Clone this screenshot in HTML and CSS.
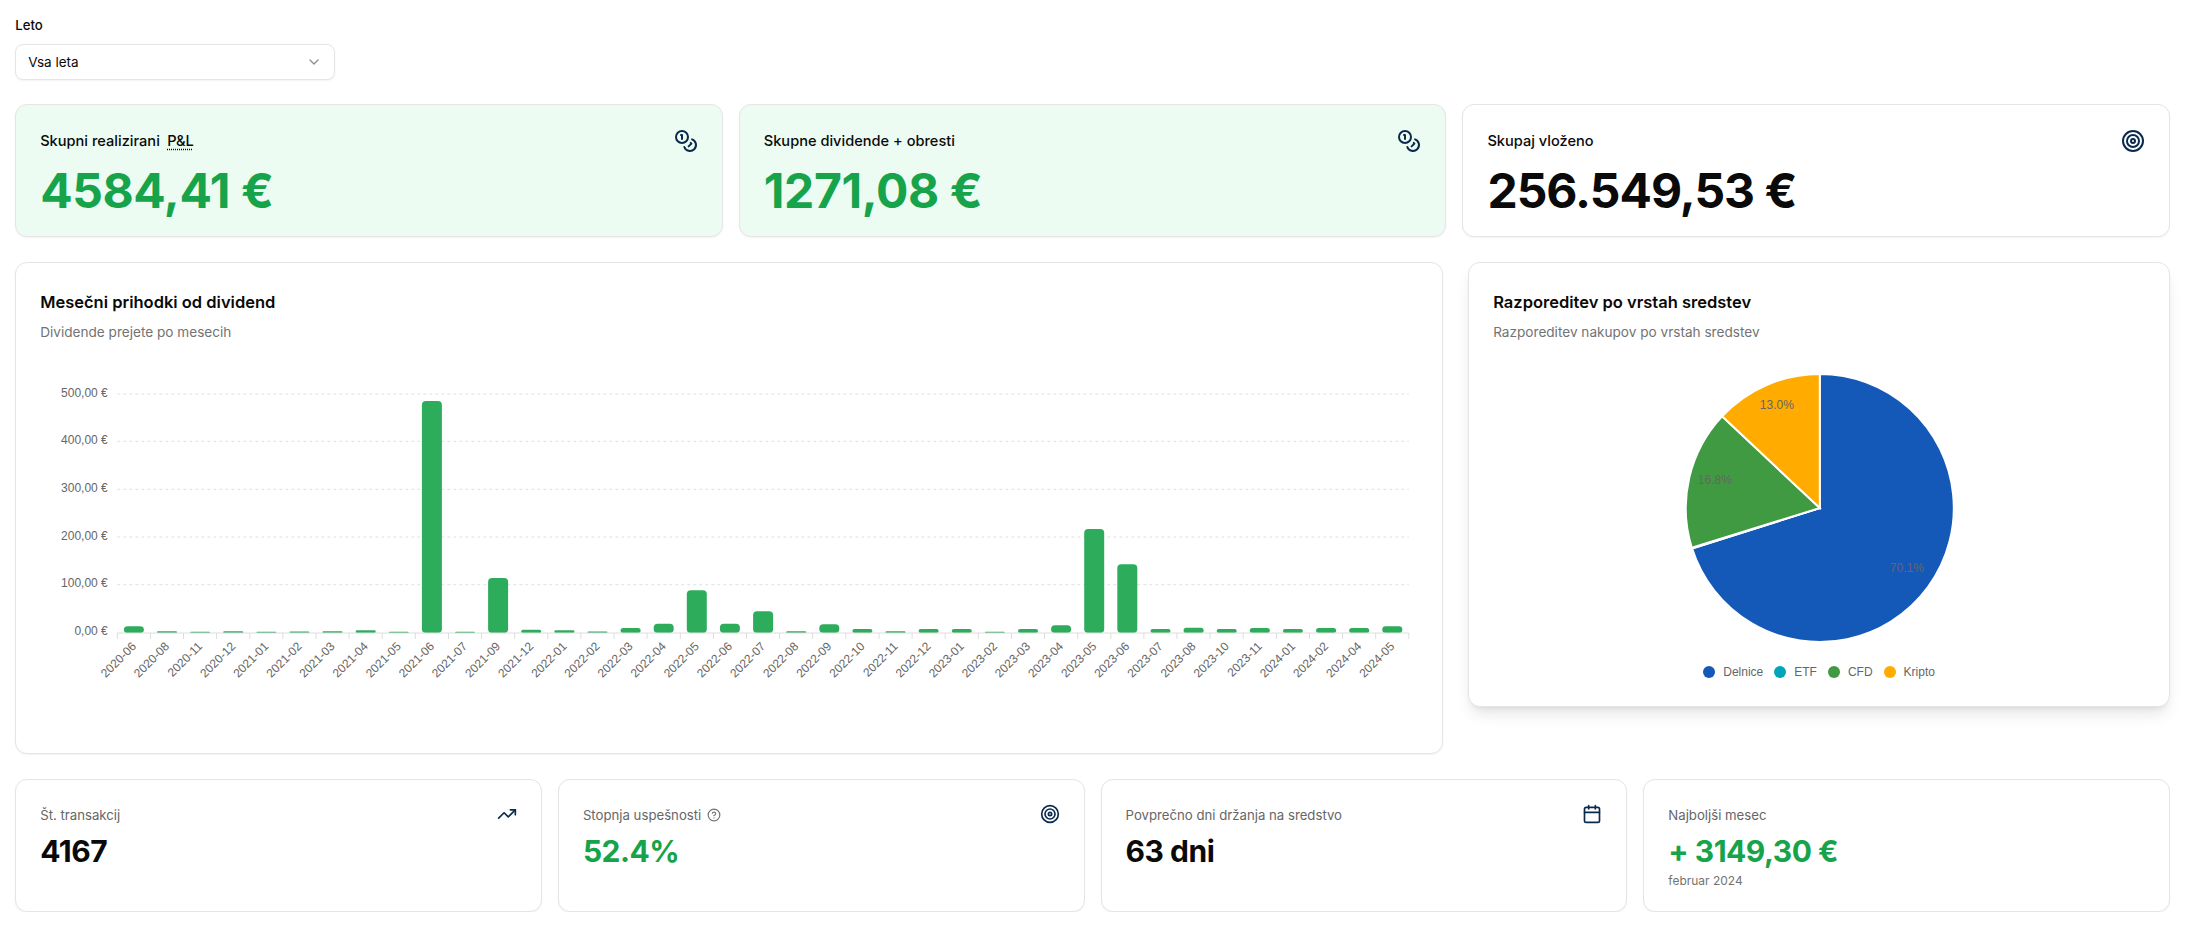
FILE: index.html
```html
<!DOCTYPE html>
<html lang="sl">
<head>
<meta charset="utf-8">
<title>Leto</title>
<link rel="stylesheet" href="styles.css">
</head>
<body>
<main class="page">
  <section class="filter">
    <label class="filter-label">Leto</label>
    <div class="select">
      <span>Vsa leta</span>
      <svg class="chev" viewBox="0 0 24 24"><path d="m6 9 6 6 6-6"/></svg>
    </div>
  </section>

  <section class="row-top">
    <article class="card stat stat-green">
      <header class="stat-head">
        <h3 class="stat-title">Skupni realizirani <abbr class="abbr">P&amp;L</abbr></h3>
        <svg class="icon" viewBox="0 0 24 24"><circle cx="8" cy="8" r="6"/><path d="M18.09 10.37A6 6 0 1 1 10.34 18"/><path d="M7 6h1v4"/><path d="m16.71 13.88.7.71-2.82 2.82"/></svg>
      </header>
      <div class="stat-value green">4584,41 €</div>
    </article>
    <article class="card stat stat-green">
      <header class="stat-head">
        <h3 class="stat-title">Skupne dividende + obresti</h3>
        <svg class="icon" viewBox="0 0 24 24"><circle cx="8" cy="8" r="6"/><path d="M18.09 10.37A6 6 0 1 1 10.34 18"/><path d="M7 6h1v4"/><path d="m16.71 13.88.7.71-2.82 2.82"/></svg>
      </header>
      <div class="stat-value green">1271,08 €</div>
    </article>
    <article class="card stat">
      <header class="stat-head">
        <h3 class="stat-title">Skupaj vloženo</h3>
        <svg class="icon" viewBox="0 0 24 24"><circle cx="12" cy="12" r="10"/><circle cx="12" cy="12" r="6"/><circle cx="12" cy="12" r="2"/></svg>
      </header>
      <div class="stat-value">256.549,53 €</div>
    </article>
  </section>

  <section class="row-charts">
    <article class="card chart-card">
      <h2 class="chart-title">Mesečni prihodki od dividend</h2>
      <p class="chart-sub">Dividende prejete po mesecih</p>
      <svg class="bar-chart" viewBox="40.2 370 1378 360">
        <g class="grid">
          <path d="M117.5 395H1409M117.5 442.3H1409M117.5 490.3H1409M117.5 538H1409M117.5 585.7H1409"/>
        </g>
        <g class="ylabels" text-anchor="end">
          <text x="108" y="398">500,00 €</text>
          <text x="108" y="445">400,00 €</text>
          <text x="108" y="493">300,00 €</text>
          <text x="108" y="541">200,00 €</text>
          <text x="108" y="588">100,00 €</text>
          <text x="108" y="636">0,00 €</text>
        </g>
        <g class="bars">
          <rect x="124.1" y="627.3" width="20" height="6.7" rx="4"/>
          <rect x="157.2" y="632.3" width="20" height="1.7" rx="1"/>
          <rect x="190.3" y="632.7" width="20" height="1.3" rx="1"/>
          <rect x="223.4" y="632.3" width="20" height="1.7" rx="1"/>
          <rect x="256.5" y="632.7" width="20" height="1.3" rx="1"/>
          <rect x="289.6" y="632.5" width="20" height="1.5" rx="1"/>
          <rect x="322.7" y="632.3" width="20" height="1.7" rx="1"/>
          <rect x="355.9" y="631.3" width="20" height="2.7" rx="1.3"/>
          <rect x="389" y="632.7" width="20" height="1.3" rx="1"/>
          <rect x="422.1" y="402" width="20" height="232" rx="4"/>
          <rect x="455.2" y="632.7" width="20" height="1.3" rx="1"/>
          <rect x="488.3" y="579" width="20" height="55" rx="4"/>
          <rect x="521.4" y="630.7" width="20" height="3.3" rx="1.6"/>
          <rect x="554.6" y="631.3" width="20" height="2.7" rx="1.3"/>
          <rect x="587.7" y="632.5" width="20" height="1.5" rx="1"/>
          <rect x="620.8" y="629" width="20" height="5" rx="2.5"/>
          <rect x="653.9" y="624.7" width="20" height="9.3" rx="4"/>
          <rect x="687" y="591.3" width="20" height="42.7" rx="4"/>
          <rect x="720.1" y="624.7" width="20" height="9.3" rx="4"/>
          <rect x="753.3" y="612.3" width="20" height="21.7" rx="4"/>
          <rect x="786.4" y="632.3" width="20" height="1.7" rx="1"/>
          <rect x="819.5" y="625.3" width="20" height="8.7" rx="4"/>
          <rect x="852.6" y="630" width="20" height="4" rx="2"/>
          <rect x="885.7" y="632.3" width="20" height="1.7" rx="1"/>
          <rect x="918.8" y="630" width="20" height="4" rx="2"/>
          <rect x="952" y="630" width="20" height="4" rx="2"/>
          <rect x="985.1" y="632.7" width="20" height="1.3" rx="1"/>
          <rect x="1018.2" y="630" width="20" height="4" rx="2"/>
          <rect x="1051.3" y="626.3" width="20" height="7.7" rx="3.8"/>
          <rect x="1084.4" y="530" width="20" height="104" rx="4"/>
          <rect x="1117.5" y="565.3" width="20" height="68.7" rx="4"/>
          <rect x="1150.7" y="630" width="20" height="4" rx="2"/>
          <rect x="1183.8" y="628.7" width="20" height="5.3" rx="2.6"/>
          <rect x="1216.9" y="630" width="20" height="4" rx="2"/>
          <rect x="1250" y="629" width="20" height="5" rx="2.5"/>
          <rect x="1283.1" y="630" width="20" height="4" rx="2"/>
          <rect x="1316.3" y="629" width="20" height="5" rx="2.5"/>
          <rect x="1349.4" y="629" width="20" height="5" rx="2.5"/>
          <rect x="1382.5" y="627.3" width="20" height="6.7" rx="3.3"/>
        </g>
        <path class="axis" d="M117.5 634H1409M117.5 634v6M150.6 634v6M183.7 634v6M216.8 634v6M250 634v6M283.1 634v6M316.2 634v6M349.3 634v6M382.4 634v6M415.5 634v6M448.7 634v6M481.8 634v6M514.9 634v6M548 634v6M581.1 634v6M614.2 634v6M647.3 634v6M680.5 634v6M713.6 634v6M746.7 634v6M779.8 634v6M812.9 634v6M846 634v6M879.2 634v6M912.3 634v6M945.4 634v6M978.5 634v6M1011.6 634v6M1044.7 634v6M1077.9 634v6M1111 634v6M1144.1 634v6M1177.2 634v6M1210.3 634v6M1243.4 634v6M1276.6 634v6M1309.7 634v6M1342.8 634v6M1375.9 634v6M1409 634v6"/>
        <g class="xlabels" text-anchor="end">
          <text x="137.1" y="648" transform="rotate(-45 137.1 648)">2020-06</text>
          <text x="170.2" y="648" transform="rotate(-45 170.2 648)">2020-08</text>
          <text x="203.3" y="648" transform="rotate(-45 203.3 648)">2020-11</text>
          <text x="236.4" y="648" transform="rotate(-45 236.4 648)">2020-12</text>
          <text x="269.5" y="648" transform="rotate(-45 269.5 648)">2021-01</text>
          <text x="302.6" y="648" transform="rotate(-45 302.6 648)">2021-02</text>
          <text x="335.7" y="648" transform="rotate(-45 335.7 648)">2021-03</text>
          <text x="368.9" y="648" transform="rotate(-45 368.9 648)">2021-04</text>
          <text x="402" y="648" transform="rotate(-45 402 648)">2021-05</text>
          <text x="435.1" y="648" transform="rotate(-45 435.1 648)">2021-06</text>
          <text x="468.2" y="648" transform="rotate(-45 468.2 648)">2021-07</text>
          <text x="501.3" y="648" transform="rotate(-45 501.3 648)">2021-09</text>
          <text x="534.4" y="648" transform="rotate(-45 534.4 648)">2021-12</text>
          <text x="567.6" y="648" transform="rotate(-45 567.6 648)">2022-01</text>
          <text x="600.7" y="648" transform="rotate(-45 600.7 648)">2022-02</text>
          <text x="633.8" y="648" transform="rotate(-45 633.8 648)">2022-03</text>
          <text x="666.9" y="648" transform="rotate(-45 666.9 648)">2022-04</text>
          <text x="700" y="648" transform="rotate(-45 700 648)">2022-05</text>
          <text x="733.1" y="648" transform="rotate(-45 733.1 648)">2022-06</text>
          <text x="766.3" y="648" transform="rotate(-45 766.3 648)">2022-07</text>
          <text x="799.4" y="648" transform="rotate(-45 799.4 648)">2022-08</text>
          <text x="832.5" y="648" transform="rotate(-45 832.5 648)">2022-09</text>
          <text x="865.6" y="648" transform="rotate(-45 865.6 648)">2022-10</text>
          <text x="898.7" y="648" transform="rotate(-45 898.7 648)">2022-11</text>
          <text x="931.8" y="648" transform="rotate(-45 931.8 648)">2022-12</text>
          <text x="965" y="648" transform="rotate(-45 965 648)">2023-01</text>
          <text x="998.1" y="648" transform="rotate(-45 998.1 648)">2023-02</text>
          <text x="1031.2" y="648" transform="rotate(-45 1031.2 648)">2023-03</text>
          <text x="1064.3" y="648" transform="rotate(-45 1064.3 648)">2023-04</text>
          <text x="1097.4" y="648" transform="rotate(-45 1097.4 648)">2023-05</text>
          <text x="1130.5" y="648" transform="rotate(-45 1130.5 648)">2023-06</text>
          <text x="1163.7" y="648" transform="rotate(-45 1163.7 648)">2023-07</text>
          <text x="1196.8" y="648" transform="rotate(-45 1196.8 648)">2023-08</text>
          <text x="1229.9" y="648" transform="rotate(-45 1229.9 648)">2023-10</text>
          <text x="1263" y="648" transform="rotate(-45 1263 648)">2023-11</text>
          <text x="1296.1" y="648" transform="rotate(-45 1296.1 648)">2024-01</text>
          <text x="1329.3" y="648" transform="rotate(-45 1329.3 648)">2024-02</text>
          <text x="1362.4" y="648" transform="rotate(-45 1362.4 648)">2024-04</text>
          <text x="1395.5" y="648" transform="rotate(-45 1395.5 648)">2024-05</text>
        </g>
      </svg>
    </article>

    <article class="card chart-card pie-card">
      <h2 class="chart-title">Razporeditev po vrstah sredstev</h2>
      <p class="chart-sub">Razporeditev nakupov po vrstah sredstev</p>
      <svg class="pie-chart" viewBox="1493.2 360 652 296">
        <g class="slices">
          <path class="c-blue" d="M1820 509L1820 375A134 134 0 1 1 1692.3 549.6Z"/>
          <path class="c-teal" d="M1820 509L1692.3 549.6A134 134 0 0 1 1692 548.8Z"/>
          <path class="c-green" d="M1820 509L1692 548.8A134 134 0 0 1 1722.3 417.3Z"/>
          <path class="c-orange" d="M1820 509L1722.3 417.3A134 134 0 0 1 1820 375Z"/>
        </g>
        <g class="pie-labels" text-anchor="middle">
          <text x="1907" y="573">70.1%</text>
          <text x="1715" y="485">16.8%</text>
          <text x="1777" y="410">13.0%</text>
        </g>
      </svg>
      <ul class="legend">
        <li><i class="dot bg-blue"></i>Delnice</li>
        <li><i class="dot bg-teal"></i>ETF</li>
        <li><i class="dot bg-green"></i>CFD</li>
        <li><i class="dot bg-orange"></i>Kripto</li>
      </ul>
    </article>
  </section>

  <section class="row-bottom">
    <article class="card mini">
      <header class="mini-head">
        <h3 class="mini-title">Št. transakcij</h3>
        <svg class="icon icon-sm" viewBox="0 0 24 24"><polyline points="22 7 13.5 15.5 8.5 10.5 2 17"/><polyline points="16 7 22 7 22 13"/></svg>
      </header>
      <div class="mini-value">4167</div>
    </article>
    <article class="card mini">
      <header class="mini-head">
        <h3 class="mini-title">Stopnja uspešnosti
          <svg class="help" viewBox="0 0 24 24"><circle cx="12" cy="12" r="10"/><path d="M9.09 9a3 3 0 0 1 5.83 1c0 2-3 3-3 3"/><path d="M12 17h.01"/></svg>
        </h3>
        <svg class="icon icon-sm" viewBox="0 0 24 24"><circle cx="12" cy="12" r="10"/><circle cx="12" cy="12" r="6"/><circle cx="12" cy="12" r="2"/></svg>
      </header>
      <div class="mini-value green">52.4%</div>
    </article>
    <article class="card mini">
      <header class="mini-head">
        <h3 class="mini-title">Povprečno dni držanja na sredstvo</h3>
        <svg class="icon icon-sm" viewBox="0 0 24 24"><path d="M8 2v4"/><path d="M16 2v4"/><rect width="18" height="18" x="3" y="4" rx="2"/><path d="M3 10h18"/></svg>
      </header>
      <div class="mini-value">63 dni</div>
    </article>
    <article class="card mini">
      <header class="mini-head">
        <h3 class="mini-title">Najboljši mesec</h3>
      </header>
      <div class="mini-value green">+ 3149,30 €</div>
      <div class="mini-sub">februar 2024</div>
    </article>
  </section>
</main>
</body>
</html>
```

FILE: styles.css
```css
* { box-sizing: border-box; }
html, body { margin: 0; padding: 0; background: #fff; }
body {
  font-family: Inter, "Liberation Sans", sans-serif;
  color: #0a0a0a;
  font-size: 13.5px;
  line-height: 20px;
}
h2, h3, p, ul { margin: 0; padding: 0; }
.page { padding: 15px 16px 0 15.2px; }

.filter-label { display: block; font-size: 13.2px; font-weight: 500; line-height: 20px; }
.select {
  margin-top: 9px;
  width: 320px;
  height: 36px;
  display: flex;
  align-items: center;
  justify-content: space-between;
  padding: 0 12px;
  background: #fff;
  border: 1px solid #e5e5e5;
  border-radius: 8px;
  box-shadow: 0 1px 2px rgba(0,0,0,.05);
}
.chev { width: 16px; height: 16px; fill: none; stroke: #737373; stroke-width: 2; stroke-linecap: round; stroke-linejoin: round; opacity: .8; }

.card {
  background: #fff;
  border: 1px solid #e5e5e5;
  border-radius: 12px;
  box-shadow: 0 1px 2px rgba(0,0,0,.05);
}

.row-top { margin-top: 24px; display: grid; grid-template-columns: repeat(3, 1fr); gap: 16px; }
.stat { height: 133px; padding: 24px; }
.stat-green { background: #ecfcf2; }
.stat-head { display: flex; justify-content: space-between; align-items: flex-start; height: 24px; }
.stat-title { font-size: 14.6px; font-weight: 500; line-height: 24px; }
.abbr { margin-left: 3.5px; text-decoration: underline dotted; text-underline-offset: 3px; }
.stat-value { margin-top: 13.5px; font-size: 48px; line-height: 48px; font-weight: 700; letter-spacing: -1px; }
.stat-value.green { letter-spacing: -.4px; }
.green { color: #16a34a; }

.icon { width: 24px; height: 24px; flex: none; fill: none; stroke: #0a2a4d; stroke-width: 2; stroke-linecap: round; stroke-linejoin: round; }
.icon-sm { width: 20px; height: 20px; }

.row-charts { margin-top: 25px; display: grid; grid-template-columns: 1428px 701.8px; column-gap: 25px; align-items: start; }
.chart-card { padding: 25px 24px 24px; height: 492px; }
.pie-card { height: 445px; padding: 25px 24px 24px; box-shadow: 0 10px 15px -3px rgba(0,0,0,.1), 0 4px 6px -4px rgba(0,0,0,.1); }
.chart-title { font-size: 16.5px; line-height: 28px; font-weight: 600; }
.chart-sub { margin-top: 6px; font-size: 13.6px; line-height: 20px; color: #737373; }

.bar-chart { display: block; margin-top: 27px; width: 1378px; height: 360px; }
.grid path { fill: none; stroke: #e0e0e0; stroke-dasharray: 3 3; }
.ylabels text, .xlabels text, .pie-labels text { font-family: "Liberation Sans", sans-serif; font-size: 12px; fill: #666; }
.bars rect { fill: #16a34a; opacity: .9; }
.axis { fill: none; stroke: #ddd; }

.pie-chart { display: block; margin-top: 17px; width: 652px; height: 296px; }
.slices path { stroke: #fff; stroke-width: 2; }
.c-blue { fill: #1559b8; }
.c-teal { fill: #00a6b8; }
.c-green { fill: #3f9a42; }
.c-orange { fill: #ffab00; }
.legend {
  list-style: none;
  margin-top: 7px;
  display: flex;
  justify-content: center;
  gap: 11px;
  font-family: "Liberation Sans", sans-serif;
  font-size: 12px;
  line-height: 20px;
  color: #666;
}
.legend li { display: flex; align-items: center; gap: 8px; }
.dot { width: 12px; height: 12px; border-radius: 50%; display: block; }
.bg-blue { background: #1559b8; }
.bg-teal { background: #00a6b8; }
.bg-green { background: #3f9a42; }
.bg-orange { background: #ffab00; }

.row-bottom { margin-top: 25px; display: grid; grid-template-columns: repeat(4, 1fr); gap: 16px; }
.mini { height: 133px; padding: 24px; }
.mini-head { display: flex; justify-content: space-between; align-items: flex-start; height: 20px; }
.mini-title { font-size: 13.2px; font-weight: 400; line-height: 22px; color: #666; display: flex; align-items: center; gap: 6px; }
.help { width: 14px; height: 14px; fill: none; stroke: #737373; stroke-width: 2; stroke-linecap: round; stroke-linejoin: round; }
.mini-value { margin-top: 9px; font-size: 30px; line-height: 36px; font-weight: 700; letter-spacing: -.5px; }
.mini-sub { margin-top: 4px; font-size: 12px; line-height: 16px; color: #737373; }
```
